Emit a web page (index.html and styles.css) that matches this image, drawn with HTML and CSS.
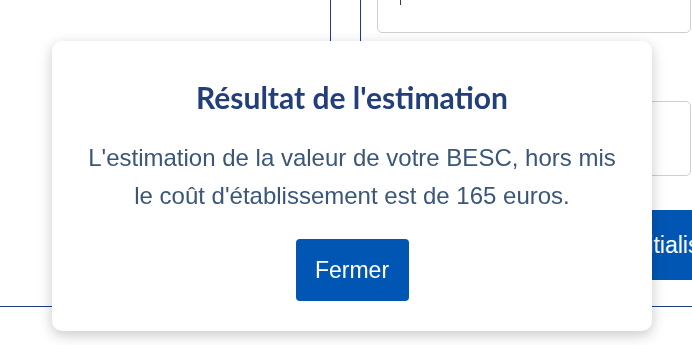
FILE: index.html
```html
<!DOCTYPE html>
<html lang="fr">
<head>
<meta charset="utf-8">
<title>Estimation</title>
<link rel="stylesheet" href="styles.css">
</head>
<body>
<div class="page">
  <div class="layout">
    <div class="col-left"></div>
    <div class="col-mid"></div>
    <div class="col-form">
      <div class="field field-top"><span class="caret"></span></div>
      <div class="field field-second"></div>
      <div class="btn-row"><button class="btn-reset">Réinitialiser</button></div>
    </div>
  </div>
  <div class="rule"></div>
</div>

<div class="modal">
  <h2 class="modal-title">Résultat de l'estimation</h2>
  <p class="modal-text">L'estimation de la valeur de votre BESC, hors mis<br>le coût d'établissement est de 165 euros.</p>
  <button class="btn-close">Fermer</button>
</div>
</body>
</html>
```

FILE: styles.css
```css
html, body {
  margin: 0;
  padding: 0;
  background: #ffffff;
  overflow: hidden;
  width: 692px;
  height: 345px;
  font-family: "Liberation Sans", Arial, sans-serif;
}

.page {
  width: 692px;
}

.layout {
  display: flex;
  height: 306px;
}

.col-left {
  width: 330px;
  border-right: 1px solid #1f3a8a;
  flex: none;
}

.col-mid {
  width: 29px;
  border-right: 1px solid #1f3a8a;
  flex: none;
}

.col-form {
  flex: 1;
  min-width: 0;
  padding-left: 16px;
  padding-right: 1px;
  margin-top: -20px;
  display: flex;
  flex-direction: column;
}

.field {
  border: 1px solid #cfcfcf;
  border-radius: 5px;
  box-sizing: border-box;
  position: relative;
}

.field-top {
  height: 53px;
}

.caret {
  position: absolute;
  left: 22px;
  top: 19px;
  width: 1px;
  height: 5px;
  background: #333a55;
}

.field-second {
  margin-top: 68px;
  height: 75px;
}

.btn-row {
  margin-top: 34px;
  padding-left: 204px;
  white-space: nowrap;
}

.btn-reset {
  height: 70px;
  border: none;
  background: #0256b3;
  color: #ffffff;
  font-family: "Liberation Sans", Arial, sans-serif;
  font-size: 23px;
  padding: 0 20px;
  white-space: nowrap;
  border-radius: 4px;
}

.rule {
  height: 1px;
  background: #1f3a8a;
}

.modal {
  position: fixed;
  left: 52px;
  top: 41px;
  width: 600px;
  height: 290px;
  box-sizing: border-box;
  background: #ffffff;
  border-radius: 10px;
  box-shadow: 0 4px 14px rgba(0, 0, 0, 0.22);
  padding: 38px 20px 30px;
  display: flex;
  flex-direction: column;
  align-items: center;
  text-align: center;
}

.modal-title {
  margin: 0;
  font-family: Lato, "Open Sans", sans-serif;
  font-weight: 700;
  font-size: 30px;
  line-height: 36px;
  color: #233f7b;
}

.modal-text {
  margin: 24px 0 0;
  font-size: 24px;
  line-height: 38px;
  color: #3a5678;
}

.btn-close {
  margin-top: 24px;
  width: 113px;
  height: 62px;
  border: none;
  border-radius: 4px;
  background: #0256b3;
  color: #ffffff;
  font-family: "Liberation Sans", Arial, sans-serif;
  font-size: 23px;
  padding: 0;
}
```
